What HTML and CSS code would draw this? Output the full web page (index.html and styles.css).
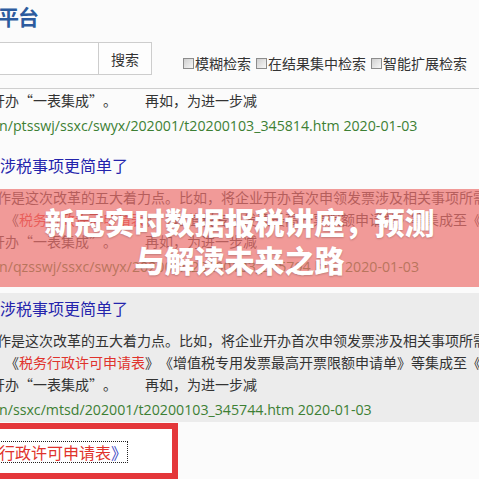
FILE: index.html
```html
<!DOCTYPE html>
<html lang="zh-CN">
  <head>
    <meta charset="utf-8">
    <title>检索平台</title>
    <link rel="stylesheet" href="styles.css">
  </head>
  <body>
    <div class="page">
      <div class="top">
        <h1 class="site-title">平台</h1>
        <form class="search-bar">
          <input class="search-input" type="text">
          <button class="search-btn" type="button">搜索</button>
          <div class="search-opts">
            <label><input type="checkbox">模糊检索</label>
            <label><input type="checkbox">在结果集中检索</label>
            <label><input type="checkbox">智能扩展检索</label>
          </div>
        </form>
      </div>

      <div class="results">
        <div class="item partial">
          <div class="desc">
            <div class="line">开办“一表集成”。　　再如，为进一步减</div>
          </div>
          <div class="url">n/ptsswj/ssxc/swyx/202001/t20200103_345814.htm 2020-01-03</div>
        </div>

        <div class="item">
          <a class="item-title" href="#">涉税事项更简单了</a>
          <div class="desc">
            <div class="line first">作是这次改革的五大着力点。比如，将企业开办首次申领发票涉及相关事项所需</div>
            <div class="line second">《<span class="hl">税务行政许可申请表</span>》《增值税专用发票最高开票限额申请单》等集成至《</div>
            <div class="line">开办“一表集成”。　　再如，为进一步减</div>
          </div>
          <div class="url">n/qzsswj/ssxc/swyx/202001/t20200103_345794.htm 2020-01-03</div>
        </div>

        <div class="item hover">
          <a class="item-title" href="#">涉税事项更简单了</a>
          <div class="desc">
            <div class="line first">作是这次改革的五大着力点。比如，将企业开办首次申领发票涉及相关事项所需</div>
            <div class="line second">《<span class="hl">税务行政许可申请表</span>》《增值税专用发票最高开票限额申请单》等集成至《</div>
            <div class="line">开办“一表集成”。　　再如，为进一步减</div>
          </div>
          <div class="url">n/ssxc/mtsd/202001/t20200103_345744.htm 2020-01-03</div>
        </div>

        <div class="item marked">
          <a class="focus-link" href="#">《<span class="hl">税务行政许可申请表</span>》</a>
        </div>
      </div>

      <!-- title banner over the list -->
      <div class="banner">
        <h2>新冠实时数据报税讲座，预测与解读未来之路</h2>
      </div>
    </div>
  </body>
</html>
```

FILE: styles.css
```css
html, body {
  margin: 0;
  padding: 0;
}
body {
  width: 479px;
  height: 479px;
  overflow: hidden;
  background-color: #fbfbfb;
  color: #333;
  font-family: "Noto Sans CJK SC", sans-serif;
  text-spacing-trim: space-all;
}
.page {
  position: relative;
  height: 479px;
}
.top {
  border-bottom: 1px solid #cfcfcf;
  padding-bottom: 13px;
}
.site-title {
  margin: 0 0 0 -2px;
  height: 32px;
  font-size: 21px;
  line-height: 32px;
  font-weight: 700;
  letter-spacing: -1px;
  color: #2c5b9e;
}
.search-bar {
  display: flex;
  align-items: center;
  margin: 10px 0 0;
}
.search-input {
  box-sizing: border-box;
  width: 100px;
  height: 33px;
  margin: 0 0 0 -2px;
  border: 1px solid #cdcdcd;
  border-right: none;
  background-color: #fff;
}
.search-btn {
  box-sizing: border-box;
  width: 54px;
  height: 33px;
  padding: 0;
  border: 1px solid #cdcdcd;
  background-color: #fdfdfd;
  color: #333;
  font-family: inherit;
  font-size: 14px;
}
.search-opts {
  display: flex;
  margin: 9px 0 0 31px;
  font-size: 14px;
  line-height: 20px;
}
.search-opts label {
  display: flex;
  align-items: center;
  margin-right: 5px;
  white-space: nowrap;
}
.search-opts input {
  appearance: none;
  box-sizing: border-box;
  width: 11px;
  height: 11px;
  margin: 0 1px 0 0;
  border: 1px solid #8c8c8c;
  background: linear-gradient(135deg, #cfcfcf, #f7f7f7);
}
.results {
  margin-left: -9px;
}
.item {
  padding-top: 4px;
  margin-bottom: 12px;
}
.item.partial {
  padding-top: 0;
}
.item.hover {
  margin-top: 14px;
  margin-bottom: 1px;
  background-color: #ececec;
}
.item-title {
  display: block;
  font-size: 16px;
  line-height: 22px;
  color: #2424ac;
  text-decoration: none;
  padding-left: 9px;
}
.desc {
  margin-top: 10px;
  font-size: 14px;
  line-height: 22px;
  white-space: nowrap;
}
.partial .desc {
  margin-top: 0;
}
.desc .first {
  padding-left: 6px;
}
.desc .second {
  padding-left: 14px;
}
.hl {
  color: #e0332c;
}
.url {
  margin-top: 2px;
  padding-left: 8px;
  font-family: "Open Sans", sans-serif;
  font-size: 14.2px;
  line-height: 25px;
  color: #3d7f34;
  white-space: nowrap;
}
.item.marked {
  box-sizing: border-box;
  width: 187px;
  margin: 0;
  padding: 11px 0 9px;
  border: 6px solid #e4373a;
  background-color: #fff;
  white-space: nowrap;
}
.focus-link {
  display: inline-block;
  margin-left: -46px;
  font-size: 16px;
  line-height: 20px;
  color: #3a47c4;
  text-decoration: none;
  outline: 1px dotted #222;
}
.banner {
  position: absolute;
  top: 189px;
  left: 0;
  right: 0;
  height: 98px;
  padding-top: 4px;
  box-sizing: border-box;
  display: flex;
  justify-content: center;
  align-items: center;
  background-color: rgba(236, 112, 110, 0.7);
}
.banner h2 {
  width: 400px;
  margin: 0;
  font-size: 30px;
  line-height: 38px;
  font-weight: 900;
  color: #fff;
  text-align: center;
  text-shadow: 0 1px 2px rgba(0, 0, 0, 0.2);
}
```
